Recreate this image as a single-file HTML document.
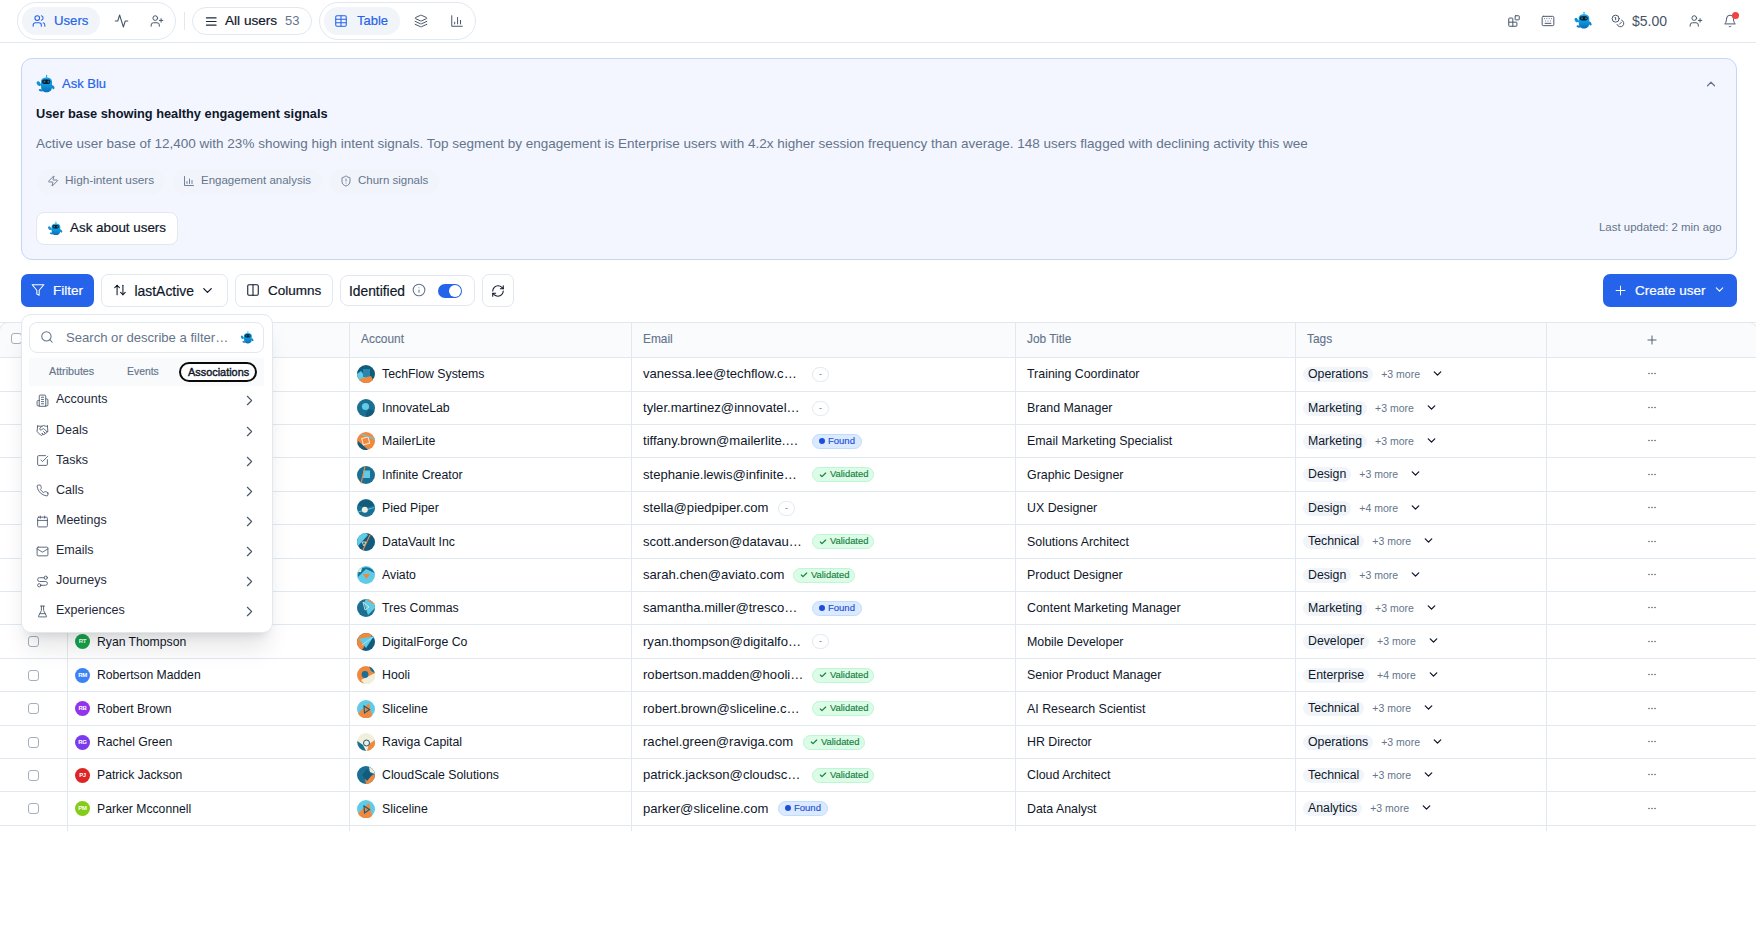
<!DOCTYPE html>
<html><head><meta charset="utf-8">
<style>
*{box-sizing:border-box;margin:0;padding:0}
html,body{width:1756px;height:945px;overflow:hidden;background:#fff}
body{font-family:"Liberation Sans",sans-serif;color:#0f172a;position:relative;font-size:13px}
.abs{position:absolute}
svg.i{fill:none;stroke:currentColor;stroke-width:2;stroke-linecap:round;stroke-linejoin:round;display:block}
.row{display:flex;align-items:center}
/* header */
#hdr{left:0;top:0;width:1756px;height:43px;border-bottom:1px solid #e2e8f0}
.pill{position:absolute;border:1px solid #e2e8f0;border-radius:20px;background:#fff}
.inpill{position:absolute;background:#f1f5f9;border-radius:14px}
.txt{position:absolute;white-space:nowrap}
.med{-webkit-text-stroke:0.2px currentColor}
.th{font-size:11.9px;color:#64748b;line-height:14px;-webkit-text-stroke:0.12px currentColor}
.td{color:#0f172a;line-height:16px}
.cb{width:11px;height:11px;border:1px solid #a3afc0;border-radius:3px;background:#fff}
.av{width:15px;height:15px;border-radius:50%;color:#fff;font-size:6px;font-weight:bold;text-align:center;line-height:15px;letter-spacing:-0.3px}
.bdash{width:17px;height:15px;border:1px solid #e2e8f0;border-radius:8px;font-size:9px;color:#64748b;text-align:center;line-height:12px}
.bfound{height:15px;border:1px solid #bfdbfe;background:#dbeafe;border-radius:8px;font-size:9.5px;color:#1d4ed8;line-height:12px;padding:0 6px 1px 6px;display:flex;align-items:center;gap:3px;white-space:nowrap;-webkit-text-stroke:0.15px currentColor}
.bfound .dot{width:6px;height:6px;border-radius:50%;background:#1d4ed8;display:inline-block}
.bvalid{height:15px;border:1px solid #bbf7d0;background:#dcfce7;border-radius:8px;font-size:9.4px;color:#15803d;line-height:12px;padding:0 5px 1px 6px;display:flex;align-items:center;gap:3px;white-space:nowrap;-webkit-text-stroke:0.15px currentColor}
.tagrow{display:flex;align-items:center;height:16px;white-space:nowrap}
.chip{background:#f1f5f9;border-radius:8px;height:15px;line-height:15px;padding:0 5px;font-size:12.3px;color:#0f172a}
.more{font-size:10.5px;color:#64748b;margin-left:8px;margin-right:12px;position:relative;top:-0.5px}
</style></head>
<body>
<svg width="0" height="0" style="position:absolute">
<defs>
<linearGradient id="rg" x1="0" y1="0" x2="0" y2="1"><stop offset="0" stop-color="#1aa6e6"/><stop offset="0.55" stop-color="#0d95da"/><stop offset="1" stop-color="#0a6cb6"/></linearGradient>
<g id="robo">
<rect x="12" y="2.8" width="1.1" height="3.6" rx="0.55" fill="#2aa9e6"/>
<ellipse cx="4.6" cy="11.6" rx="1.7" ry="2.5" transform="rotate(-35 4.6 11.6)" fill="#1590d6"/>
<path d="M5 12.5L8 14.5 8 11.5Z" fill="#1590d6"/>
<ellipse cx="18.9" cy="15.2" rx="1.3" ry="2.2" transform="rotate(-30 18.9 15.2)" fill="#1485cc"/>
<ellipse cx="6.8" cy="18.2" rx="2.1" ry="1.1" transform="rotate(15 6.8 18.2)" fill="#137fc6"/>
<path d="M7 9.6C7 6.9 9.6 5.6 12.5 5.6S18 6.9 18 9.6V15C18 18.5 15.5 20.3 12.5 20.3S7.1 18.5 7.1 15Z" fill="url(#rg)"/>
<rect x="8.1" y="7.5" width="8.3" height="4.4" rx="2.2" fill="#06182b"/>
<circle cx="10.5" cy="9.7" r="1.15" fill="#1a7594"/>
<circle cx="14.5" cy="9.7" r="1.15" fill="#1a7594"/>
</g>
</defs></svg>
<!-- HEADER -->
<div id="hdr" class="abs"></div>
<div class="pill" style="left:17px;top:2px;width:159px;height:38px"></div>
<div class="inpill" style="left:22px;top:7px;width:78px;height:28px"></div>
<svg class="i abs" style="left:32px;top:14px;color:#2563eb;stroke-width:1.8" width="14" height="14" viewBox="0 0 24 24"><path d="M16 21v-2a4 4 0 0 0-4-4H6a4 4 0 0 0-4 4v2"/><circle cx="9" cy="7" r="4"/><path d="M22 21v-2a4 4 0 0 0-3-3.87"/><path d="M16 3.13a4 4 0 0 1 0 7.75"/></svg>
<div class="txt med" style="left:54px;top:13px;font-size:13.2px;color:#2563eb">Users</div>
<svg class="i abs" style="left:113.5px;top:13px;color:#475569;stroke-width:1.7" width="15" height="16" viewBox="0 0 24 24" preserveAspectRatio="none"><path d="M22 12h-4l-3 9L9 3l-3 9H2"/></svg>
<svg class="i abs" style="left:150px;top:14px;color:#475569;stroke-width:1.7" width="14" height="14" viewBox="0 0 24 24"><path d="M16 21v-2a4 4 0 0 0-4-4H6a4 4 0 0 0-4 4v2"/><circle cx="9" cy="7" r="4"/><line x1="19" x2="19" y1="8" y2="14"/><line x1="22" x2="16" y1="11" y2="11"/></svg>
<div class="abs" style="left:184px;top:12px;width:1px;height:18px;background:#e2e8f0"></div>
<div class="pill" style="left:192px;top:7px;width:120px;height:28px;border-radius:14px"></div>
<svg class="i abs" style="left:204px;top:13.5px;color:#1e293b;stroke-width:1.8" width="14.5" height="15" viewBox="0 0 24 24"><line x1="4" x2="20" y1="12" y2="12"/><line x1="4" x2="20" y1="6" y2="6"/><line x1="4" x2="20" y1="18" y2="18"/></svg>
<div class="txt med" style="left:225px;top:13px;font-size:13.6px;color:#0f172a">All users</div>
<div class="txt" style="left:285px;top:13px;font-size:13px;color:#64748b">53</div>
<div class="pill" style="left:319px;top:2px;width:157px;height:38px"></div>
<div class="inpill" style="left:324px;top:7px;width:76px;height:28px"></div>
<svg class="i abs" style="left:334px;top:14px;color:#2563eb;stroke-width:1.8" width="14" height="14" viewBox="0 0 24 24"><path d="M12 3v18"/><rect width="18" height="18" x="3" y="3" rx="2"/><path d="M3 9h18"/><path d="M3 15h18"/></svg>
<div class="txt med" style="left:357px;top:13px;font-size:13px;color:#2563eb">Table</div>
<svg class="i abs" style="left:414px;top:14px;color:#475569;stroke-width:1.7" width="14" height="14" viewBox="0 0 24 24"><path d="m12.83 2.18a2 2 0 0 0-1.66 0L2.6 6.08a1 1 0 0 0 0 1.83l8.58 3.91a2 2 0 0 0 1.66 0l8.58-3.9a1 1 0 0 0 0-1.83Z"/><path d="m22 17.65-9.17 4.16a2 2 0 0 1-1.66 0L2 17.65"/><path d="m22 12.65-9.17 4.16a2 2 0 0 1-1.66 0L2 12.65"/></svg>
<svg class="i abs" style="left:450px;top:14px;color:#475569;stroke-width:1.7" width="14" height="14" viewBox="0 0 24 24"><path d="M3 3v18h18"/><path d="M18 17v-6"/><path d="M13 17V6"/><path d="M8 17v-3"/></svg>

<!--RIGHT-->
<svg class="i abs" style="left:1507px;top:14px;color:#475569;stroke-width:1.7" width="14" height="14" viewBox="0 0 24 24"><rect width="7" height="7" x="14" y="3" rx="1"/><path d="M10 21V8a1 1 0 0 0-1-1H4a1 1 0 0 0-1 1v12a1 1 0 0 0 1 1h12a1 1 0 0 0 1-1v-5a1 1 0 0 0-1-1H3"/></svg>
<svg class="i abs" style="left:1541px;top:14px;color:#475569;stroke-width:1.7" width="14" height="14" viewBox="0 0 24 24"><path d="M10 8h.01"/><path d="M12 12h.01"/><path d="M14 8h.01"/><path d="M16 12h.01"/><path d="M18 8h.01"/><path d="M6 8h.01"/><path d="M7 16h10"/><path d="M8 12h.01"/><rect width="20" height="16" x="2" y="4" rx="2"/></svg>
<svg class="abs robot" style="left:1572px;top:9px" width="23" height="23" viewBox="0 0 24 24"><use href="#robo"/></svg>
<svg class="i abs" style="left:1611px;top:14px;color:#475569;stroke-width:1.7" width="14" height="14" viewBox="0 0 24 24"><circle cx="8" cy="8" r="6"/><path d="M18.09 10.37A6 6 0 1 1 10.34 18"/><path d="M7 6h1v4"/><path d="m16.71 13.88.7.71-2.82 2.82"/></svg>
<div class="txt" style="left:1632px;top:13px;font-size:14px;color:#475569">$5.00</div>
<svg class="i abs" style="left:1689px;top:14px;color:#475569;stroke-width:1.7" width="14" height="14" viewBox="0 0 24 24"><path d="M16 21v-2a4 4 0 0 0-4-4H6a4 4 0 0 0-4 4v2"/><circle cx="9" cy="7" r="4"/><line x1="19" x2="19" y1="8" y2="14"/><line x1="22" x2="16" y1="11" y2="11"/></svg>
<svg class="i abs" style="left:1723px;top:14px;color:#475569;stroke-width:1.7" width="14" height="14" viewBox="0 0 24 24"><path d="M6 8a6 6 0 0 1 12 0c0 7 3 9 3 9H3s3-2 3-9"/><path d="M10.3 21a1.94 1.94 0 0 0 3.4 0"/></svg>
<div class="abs" style="left:1732px;top:12px;width:7px;height:7px;border-radius:50%;background:#ef4444"></div>

<!-- CARD -->
<div class="abs" style="left:21px;top:58px;width:1716px;height:202px;background:#f3f6fe;border:1px solid #c6d6f7;border-radius:11px"></div>
<svg class="abs" style="left:34px;top:72px" width="24" height="24" viewBox="0 0 24 24"><use href="#robo"/></svg>
<div class="txt med" style="left:62px;top:76px;font-size:13px;color:#2563eb">Ask Blu</div>
<svg class="i abs" style="left:1704px;top:77px;color:#64748b;stroke-width:2.1" width="14" height="14" viewBox="0 0 24 24"><path d="m18 15-6-6-6 6"/></svg>
<div class="txt" style="left:36px;top:106px;font-size:12.8px;font-weight:bold;color:#0f172a">User base showing healthy engagement signals</div>
<div class="txt" style="left:36px;top:136px;font-size:13.5px;color:#64748b">Active user base of 12,400 with 23% showing high intent signals. Top segment by engagement is Enterprise users with 4.2x higher session frequency than average. 148 users flagged with declining activity this wee</div>
<div class="abs" style="left:37px;top:169px;width:127px;height:25px;border-radius:13px;background:#f1f4fb"></div>
<div class="abs" style="left:173px;top:169px;width:149px;height:25px;border-radius:13px;background:#f1f4fb"></div>
<div class="abs" style="left:330px;top:169px;width:109px;height:25px;border-radius:13px;background:#f1f4fb"></div>
<svg class="i abs" style="left:47px;top:175px;color:#64748b;stroke-width:1.8" width="12" height="12" viewBox="0 0 24 24"><path d="M4 14a1 1 0 0 1-.78-1.63l9.9-10.2a.5.5 0 0 1 .86.46l-1.92 6.02A1 1 0 0 0 13 10h7a1 1 0 0 1 .78 1.630l-9.9 10.2a.5.5 0 0 1-.86-.46l1.92-6.02A1 1 0 0 0 11 14z"/></svg>
<div class="txt" style="left:65px;top:173px;font-size:11.8px;color:#64748b">High-intent users</div>
<svg class="i abs" style="left:183px;top:175px;color:#64748b;stroke-width:1.8" width="12" height="12" viewBox="0 0 24 24"><path d="M3 3v18h18"/><path d="M18 17v-6"/><path d="M13 17V8"/><path d="M8 17v-4"/></svg>
<div class="txt" style="left:201px;top:174px;font-size:11.5px;color:#64748b">Engagement analysis</div>
<svg class="i abs" style="left:340px;top:175px;color:#64748b;stroke-width:1.8" width="12" height="12" viewBox="0 0 24 24"><path d="M20 13c0 5-3.5 7.5-7.66 8.95a1 1 0 0 1-.67-.01C7.5 20.5 4 18 4 13V6a1 1 0 0 1 1-1c2 0 4.5-1.2 6.24-2.72a1.17 1.17 0 0 1 1.52 0C14.51 3.81 17 5 19 5a1 1 0 0 1 1 1z"/><path d="M12 8v4"/><path d="M12 16h.01"/></svg>
<div class="txt" style="left:358px;top:174px;font-size:11.5px;color:#64748b">Churn signals</div>
<div class="abs" style="left:36px;top:212px;width:142px;height:33px;border-radius:8px;background:#fff;border:1px solid #e2e8f0"></div>
<svg class="abs" style="left:46px;top:218.5px" width="19" height="19" viewBox="0 0 24 24"><use href="#robo"/></svg>
<div class="txt med" style="left:70px;top:220px;font-size:13.4px;color:#0f172a">Ask about users</div>
<div class="txt" style="left:1599px;top:221px;font-size:11.45px;color:#64748b">Last updated: 2 min ago</div>

<!-- TOOLBAR -->
<div class="abs" style="left:21px;top:274px;width:73px;height:33px;border-radius:7px;background:#2563eb"></div>
<svg class="i abs" style="left:31px;top:283px;color:#fff;stroke-width:1.8" width="14" height="14" viewBox="0 0 24 24"><polygon points="22 3 2 3 10 12.46 10 19 14 21 14 12.46 22 3"/></svg>
<div class="txt med" style="left:53px;top:283px;font-size:13.5px;color:#fff">Filter</div>
<div class="abs" style="left:101px;top:274px;width:127px;height:33px;border-radius:7px;background:#fff;border:1px solid #e2e8f0"></div>
<svg class="i abs" style="left:113px;top:283px;color:#0f172a;stroke-width:1.8" width="14" height="14" viewBox="0 0 24 24"><path d="m21 16-4 4-4-4"/><path d="M17 20V4"/><path d="m3 8 4-4 4 4"/><path d="M7 4v16"/></svg>
<div class="txt med" style="left:134.5px;top:283px;font-size:13.9px;color:#0f172a">lastActive</div>
<svg class="i abs" style="left:200px;top:283px;color:#0f172a;stroke-width:2" width="15" height="15" viewBox="0 0 24 24"><path d="m6 9 6 6 6-6"/></svg>
<div class="abs" style="left:235px;top:274px;width:98px;height:33px;border-radius:7px;background:#fff;border:1px solid #e2e8f0"></div>
<svg class="i abs" style="left:246px;top:283px;color:#0f172a;stroke-width:1.8" width="14" height="14" viewBox="0 0 24 24"><rect width="18" height="18" x="3" y="3" rx="2"/><path d="M12 3v18"/></svg>
<div class="txt med" style="left:268px;top:283px;font-size:13.5px;color:#0f172a">Columns</div>
<div class="abs" style="left:340px;top:275px;width:135px;height:31px;border-radius:8px;background:#fff;border:1px solid #e2e8f0"></div>
<div class="txt med" style="left:349px;top:284px;font-size:13.8px;color:#0f172a">Identified</div>
<svg class="i abs" style="left:412px;top:283px;color:#64748b;stroke-width:1.8" width="14" height="14" viewBox="0 0 24 24"><circle cx="12" cy="12" r="10"/><path d="M12 16v-4"/><path d="M12 8h.01"/></svg>
<div class="abs" style="left:438px;top:284px;width:24px;height:14px;border-radius:7px;background:#2563eb"></div>
<div class="abs" style="left:449px;top:285px;width:12px;height:12px;border-radius:50%;background:#fff"></div>
<div class="abs" style="left:482px;top:274px;width:32px;height:33px;border-radius:7px;background:#fff;border:1px solid #e2e8f0"></div>
<svg class="i abs" style="left:491px;top:284px;color:#0f172a;stroke-width:1.8" width="14" height="14" viewBox="0 0 24 24"><path d="M3 12a9 9 0 0 1 9-9 9.75 9.75 0 0 1 6.74 2.74L21 8"/><path d="M21 3v5h-5"/><path d="M21 12a9 9 0 0 1-9 9 9.75 9.75 0 0 1-6.74-2.74L3 16"/><path d="M8 16H3v5"/></svg>
<div class="abs" style="left:1603px;top:274px;width:134px;height:33px;border-radius:7px;background:#2563eb"></div>
<svg class="i abs" style="left:1612.5px;top:283px;color:#fff;stroke-width:1.6" width="15" height="15" viewBox="0 0 24 24"><path d="M5 12h14"/><path d="M12 5v14"/></svg>
<div class="txt med" style="left:1635px;top:283px;font-size:13.5px;color:#fff">Create user</div>
<svg class="i abs" style="left:1712.5px;top:283px;color:#fff;stroke-width:2" width="13" height="13" viewBox="0 0 24 24"><path d="m6 9 6 6 6-6"/></svg>

<!-- TABLE -->
<div class="abs" style="left:-1px;top:322px;width:1759px;height:36px;background:#f9fbfd;border:1px solid #e2e8f0;border-bottom:none;border-radius:9px 9px 0 0"></div>
<div class="abs" style="left:0;top:322px;width:1756px;height:1px;background:#e2e8f0"></div>
<div class="abs" style="left:11px;top:333px;width:11px;height:11px;border:1px solid #a3afc0;border-radius:3px;background:#fff"></div>
<div class="abs" style="left:67px;top:323px;width:1px;height:508px;background:#e2e8f0"></div>
<div class="abs" style="left:349px;top:323px;width:1px;height:508px;background:#e2e8f0"></div>
<div class="abs" style="left:631px;top:323px;width:1px;height:508px;background:#e2e8f0"></div>
<div class="abs" style="left:1015px;top:323px;width:1px;height:508px;background:#e2e8f0"></div>
<div class="abs" style="left:1295px;top:323px;width:1px;height:508px;background:#e2e8f0"></div>
<div class="abs" style="left:1546px;top:323px;width:1px;height:508px;background:#e2e8f0"></div>
<div class="abs" style="left:0;top:357px;width:1756px;height:1px;background:#e2e8f0"></div>
<div class="abs" style="left:0;top:391px;width:1756px;height:1px;background:#e2e8f0"></div>
<div class="abs" style="left:0;top:424px;width:1756px;height:1px;background:#e2e8f0"></div>
<div class="abs" style="left:0;top:457px;width:1756px;height:1px;background:#e2e8f0"></div>
<div class="abs" style="left:0;top:491px;width:1756px;height:1px;background:#e2e8f0"></div>
<div class="abs" style="left:0;top:524px;width:1756px;height:1px;background:#e2e8f0"></div>
<div class="abs" style="left:0;top:558px;width:1756px;height:1px;background:#e2e8f0"></div>
<div class="abs" style="left:0;top:591px;width:1756px;height:1px;background:#e2e8f0"></div>
<div class="abs" style="left:0;top:624px;width:1756px;height:1px;background:#e2e8f0"></div>
<div class="abs" style="left:0;top:658px;width:1756px;height:1px;background:#e2e8f0"></div>
<div class="abs" style="left:0;top:691px;width:1756px;height:1px;background:#e2e8f0"></div>
<div class="abs" style="left:0;top:725px;width:1756px;height:1px;background:#e2e8f0"></div>
<div class="abs" style="left:0;top:758px;width:1756px;height:1px;background:#e2e8f0"></div>
<div class="abs" style="left:0;top:791px;width:1756px;height:1px;background:#e2e8f0"></div>
<div class="abs" style="left:0;top:825px;width:1756px;height:1px;background:#e2e8f0"></div>
<div class="txt th" style="left:98px;top:332px">Name</div>
<div class="txt th" style="left:361px;top:332px">Account</div>
<div class="txt th" style="left:643px;top:332px">Email</div>
<div class="txt th" style="left:1027px;top:332px">Job Title</div>
<div class="txt th" style="left:1307px;top:332px">Tags</div>
<svg class="i abs" style="left:1645px;top:333px;color:#475569;stroke-width:1.6" width="14" height="14" viewBox="0 0 24 24"><path d="M5 12h14"/><path d="M12 5v14"/></svg>
<div class="abs cb" style="left:28px;top:368.5px"></div>
<svg class="abs" style="left:357px;top:365.0px" width="18" height="18" viewBox="0 0 18 18"><circle cx="9" cy="9" r="9" fill="#135b7c"/><path d="M0 9A9 9 0 0 0 4 16.5L9 13 4 6Z" fill="#5fcbe6"/><rect x="6" y="4" width="7" height="8" fill="#2a86ad"/><path d="M2 14.5A9 9 0 0 0 16 15L14 11 6 13Z" fill="#f0883e"/></svg>
<div class="txt td" style="left:382px;top:366.0px;font-size:12.3px">TechFlow Systems</div>
<div class="txt td" style="left:643px;top:366.0px;font-size:13.1px">vanessa.lee@techflow.c…</div>
<div class="abs bdash" style="left:812px;top:366.5px">-</div>
<div class="txt td" style="left:1027px;top:366.0px;font-size:12.4px">Training Coordinator</div>
<div class="abs tagrow" style="left:1303px;top:366.0px"><span class="chip">Operations</span><span class="more">+3 more</span><svg class="i" style="color:#0f172a;stroke-width:2.4;position:relative;top:-1px;left:-1px" width="13" height="13" viewBox="0 0 24 24"><path d="m6 9 6 6 6-6"/></svg></div>
<svg class="abs" style="left:1646px;top:368.0px" width="12" height="12" viewBox="0 0 24 24"><circle cx="6" cy="11" r="1.4" fill="#334155"/><circle cx="12" cy="11" r="1.4" fill="#334155"/><circle cx="18" cy="11" r="1.4" fill="#334155"/></svg>
<div class="abs cb" style="left:28px;top:402.5px"></div>
<svg class="abs" style="left:357px;top:399.0px" width="18" height="18" viewBox="0 0 18 18"><circle cx="9" cy="9" r="9" fill="#1a6f93"/><circle cx="8.5" cy="7.5" r="3.6" fill="#5fcbe6"/><path d="M9 18A9 9 0 0 0 17.5 12L12 10 9 14Z" fill="#135b7c"/></svg>
<div class="txt td" style="left:382px;top:400.0px;font-size:12.3px">InnovateLab</div>
<div class="txt td" style="left:643px;top:400.0px;font-size:13.1px">tyler.martinez@innovatel…</div>
<div class="abs bdash" style="left:812px;top:400.5px">-</div>
<div class="txt td" style="left:1027px;top:400.0px;font-size:12.4px">Brand Manager</div>
<div class="abs tagrow" style="left:1303px;top:400.0px"><span class="chip">Marketing</span><span class="more">+3 more</span><svg class="i" style="color:#0f172a;stroke-width:2.4;position:relative;top:-1px;left:-1px" width="13" height="13" viewBox="0 0 24 24"><path d="m6 9 6 6 6-6"/></svg></div>
<svg class="abs" style="left:1646px;top:402.0px" width="12" height="12" viewBox="0 0 24 24"><circle cx="6" cy="11" r="1.4" fill="#334155"/><circle cx="12" cy="11" r="1.4" fill="#334155"/><circle cx="18" cy="11" r="1.4" fill="#334155"/></svg>
<div class="abs cb" style="left:28px;top:435.5px"></div>
<svg class="abs" style="left:357px;top:432.0px" width="18" height="18" viewBox="0 0 18 18"><circle cx="9" cy="9" r="9" fill="#f0883e"/><path d="M0.5 12A9 9 0 0 0 11 17.8L1 9Z" fill="#135b7c"/><rect x="5.5" y="5.5" width="6.5" height="6.5" transform="rotate(-15 9 9)" fill="none" stroke="#f1eedc" stroke-width="1"/><path d="M4 2L18 7" stroke="#5fcbe6" stroke-width="1.2"/></svg>
<div class="txt td" style="left:382px;top:433.0px;font-size:12.3px">MailerLite</div>
<div class="txt td" style="left:643px;top:433.0px;font-size:13.1px">tiffany.brown@mailerlite.…</div>
<div class="abs bfound" style="left:812px;top:433.5px"><span class="dot"></span>Found</div>
<div class="txt td" style="left:1027px;top:433.0px;font-size:12.4px">Email Marketing Specialist</div>
<div class="abs tagrow" style="left:1303px;top:433.0px"><span class="chip">Marketing</span><span class="more">+3 more</span><svg class="i" style="color:#0f172a;stroke-width:2.4;position:relative;top:-1px;left:-1px" width="13" height="13" viewBox="0 0 24 24"><path d="m6 9 6 6 6-6"/></svg></div>
<svg class="abs" style="left:1646px;top:435.0px" width="12" height="12" viewBox="0 0 24 24"><circle cx="6" cy="11" r="1.4" fill="#334155"/><circle cx="12" cy="11" r="1.4" fill="#334155"/><circle cx="18" cy="11" r="1.4" fill="#334155"/></svg>
<div class="abs cb" style="left:28px;top:469.0px"></div>
<svg class="abs" style="left:357px;top:465.5px" width="18" height="18" viewBox="0 0 18 18"><circle cx="9" cy="9" r="9" fill="#1a6f93"/><rect x="6" y="4.5" width="7" height="7.5" fill="#5fcbe6"/><path d="M8 0.5L4 17.5" stroke="#f0883e" stroke-width="1.1"/></svg>
<div class="txt td" style="left:382px;top:466.5px;font-size:12.3px">Infinite Creator</div>
<div class="txt td" style="left:643px;top:466.5px;font-size:13.1px">stephanie.lewis@infinite…</div>
<div class="abs bvalid" style="left:812px;top:467.0px"><svg class="i" style="color:#15803d;stroke-width:3.5;margin-top:1px" width="8" height="8" viewBox="0 0 24 24"><path d="M20 6 9 17l-5-5"/></svg>Validated</div>
<div class="txt td" style="left:1027px;top:466.5px;font-size:12.4px">Graphic Designer</div>
<div class="abs tagrow" style="left:1303px;top:466.5px"><span class="chip">Design</span><span class="more">+3 more</span><svg class="i" style="color:#0f172a;stroke-width:2.4;position:relative;top:-1px;left:-1px" width="13" height="13" viewBox="0 0 24 24"><path d="m6 9 6 6 6-6"/></svg></div>
<svg class="abs" style="left:1646px;top:468.5px" width="12" height="12" viewBox="0 0 24 24"><circle cx="6" cy="11" r="1.4" fill="#334155"/><circle cx="12" cy="11" r="1.4" fill="#334155"/><circle cx="18" cy="11" r="1.4" fill="#334155"/></svg>
<div class="abs cb" style="left:28px;top:502.5px"></div>
<svg class="abs" style="left:357px;top:499.0px" width="18" height="18" viewBox="0 0 18 18"><circle cx="9" cy="9" r="9" fill="#1a6f93"/><path d="M1 6A9 9 0 0 1 17 6L9 9Z" fill="#135b7c"/><path d="M0.8 13L17.5 8.5" stroke="#5fcbe6" stroke-width="0.9"/><circle cx="7.8" cy="10.8" r="3" fill="#f1eedc"/></svg>
<div class="txt td" style="left:382px;top:500.0px;font-size:12.3px">Pied Piper</div>
<div class="txt td" style="left:643px;top:500.0px;font-size:13.1px">stella@piedpiper.com</div>
<div class="abs bdash" style="left:778px;top:500.5px">-</div>
<div class="txt td" style="left:1027px;top:500.0px;font-size:12.4px">UX Designer</div>
<div class="abs tagrow" style="left:1303px;top:500.0px"><span class="chip">Design</span><span class="more">+4 more</span><svg class="i" style="color:#0f172a;stroke-width:2.4;position:relative;top:-1px;left:-1px" width="13" height="13" viewBox="0 0 24 24"><path d="m6 9 6 6 6-6"/></svg></div>
<svg class="abs" style="left:1646px;top:502.0px" width="12" height="12" viewBox="0 0 24 24"><circle cx="6" cy="11" r="1.4" fill="#334155"/><circle cx="12" cy="11" r="1.4" fill="#334155"/><circle cx="18" cy="11" r="1.4" fill="#334155"/></svg>
<div class="abs cb" style="left:28px;top:536.0px"></div>
<svg class="abs" style="left:357px;top:532.5px" width="18" height="18" viewBox="0 0 18 18"><circle cx="9" cy="9" r="9" fill="#135b7c"/><path d="M9 0A9 9 0 0 0 1 13L11 2Z" fill="#5fcbe6"/><path d="M13 2L6 17" stroke="#f0883e" stroke-width="1.1"/><path d="M5 9L9 9 7 13Z" fill="none" stroke="#f1eedc" stroke-width="0.8"/></svg>
<div class="txt td" style="left:382px;top:533.5px;font-size:12.3px">DataVault Inc</div>
<div class="txt td" style="left:643px;top:533.5px;font-size:13.1px">scott.anderson@datavau…</div>
<div class="abs bvalid" style="left:812px;top:534.0px"><svg class="i" style="color:#15803d;stroke-width:3.5;margin-top:1px" width="8" height="8" viewBox="0 0 24 24"><path d="M20 6 9 17l-5-5"/></svg>Validated</div>
<div class="txt td" style="left:1027px;top:533.5px;font-size:12.4px">Solutions Architect</div>
<div class="abs tagrow" style="left:1303px;top:533.5px"><span class="chip">Technical</span><span class="more">+3 more</span><svg class="i" style="color:#0f172a;stroke-width:2.4;position:relative;top:-1px;left:-1px" width="13" height="13" viewBox="0 0 24 24"><path d="m6 9 6 6 6-6"/></svg></div>
<svg class="abs" style="left:1646px;top:535.5px" width="12" height="12" viewBox="0 0 24 24"><circle cx="6" cy="11" r="1.4" fill="#334155"/><circle cx="12" cy="11" r="1.4" fill="#334155"/><circle cx="18" cy="11" r="1.4" fill="#334155"/></svg>
<div class="abs cb" style="left:28px;top:569.5px"></div>
<svg class="abs" style="left:357px;top:566.0px" width="18" height="18" viewBox="0 0 18 18"><circle cx="9" cy="9" r="9" fill="#5fcbe6"/><path d="M4 3A9 9 0 0 1 17.5 7L9 3 1 11A9 9 0 0 1 4 3Z" fill="#1a6f93"/><path d="M1 6A9 9 0 0 1 5 1.5L4 6Z" fill="#f1eedc"/><path d="M6 8L13 8 9.5 13Z" fill="#f0883e"/></svg>
<div class="txt td" style="left:382px;top:567.0px;font-size:12.3px">Aviato</div>
<div class="txt td" style="left:643px;top:567.0px;font-size:13.1px">sarah.chen@aviato.com</div>
<div class="abs bvalid" style="left:793px;top:567.5px"><svg class="i" style="color:#15803d;stroke-width:3.5;margin-top:1px" width="8" height="8" viewBox="0 0 24 24"><path d="M20 6 9 17l-5-5"/></svg>Validated</div>
<div class="txt td" style="left:1027px;top:567.0px;font-size:12.4px">Product Designer</div>
<div class="abs tagrow" style="left:1303px;top:567.0px"><span class="chip">Design</span><span class="more">+3 more</span><svg class="i" style="color:#0f172a;stroke-width:2.4;position:relative;top:-1px;left:-1px" width="13" height="13" viewBox="0 0 24 24"><path d="m6 9 6 6 6-6"/></svg></div>
<svg class="abs" style="left:1646px;top:569.0px" width="12" height="12" viewBox="0 0 24 24"><circle cx="6" cy="11" r="1.4" fill="#334155"/><circle cx="12" cy="11" r="1.4" fill="#334155"/><circle cx="18" cy="11" r="1.4" fill="#334155"/></svg>
<div class="abs cb" style="left:28px;top:602.5px"></div>
<svg class="abs" style="left:357px;top:599.0px" width="18" height="18" viewBox="0 0 18 18"><circle cx="9" cy="9" r="9" fill="#1a6f93"/><path d="M9 0A9 9 0 0 1 18 9L11 16 7 4Z" fill="#5fcbe6"/><path d="M10 0.5L17.5 5" stroke="#f0883e" stroke-width="1.2"/><path d="M6 3L8 11 12 8Z" fill="none" stroke="#f1eedc" stroke-width="0.8"/></svg>
<div class="txt td" style="left:382px;top:600.0px;font-size:12.3px">Tres Commas</div>
<div class="txt td" style="left:643px;top:600.0px;font-size:13.1px">samantha.miller@tresco…</div>
<div class="abs bfound" style="left:812px;top:600.5px"><span class="dot"></span>Found</div>
<div class="txt td" style="left:1027px;top:600.0px;font-size:12.4px">Content Marketing Manager</div>
<div class="abs tagrow" style="left:1303px;top:600.0px"><span class="chip">Marketing</span><span class="more">+3 more</span><svg class="i" style="color:#0f172a;stroke-width:2.4;position:relative;top:-1px;left:-1px" width="13" height="13" viewBox="0 0 24 24"><path d="m6 9 6 6 6-6"/></svg></div>
<svg class="abs" style="left:1646px;top:602.0px" width="12" height="12" viewBox="0 0 24 24"><circle cx="6" cy="11" r="1.4" fill="#334155"/><circle cx="12" cy="11" r="1.4" fill="#334155"/><circle cx="18" cy="11" r="1.4" fill="#334155"/></svg>
<div class="abs cb" style="left:28px;top:636.0px"></div>
<div class="abs av" style="left:75px;top:634.0px;background:#16a34a">RT</div>
<div class="txt td" style="left:97px;top:633.5px;font-size:12.2px">Ryan Thompson</div>
<svg class="abs" style="left:357px;top:632.5px" width="18" height="18" viewBox="0 0 18 18"><circle cx="9" cy="9" r="9" fill="#135b7c"/><path d="M9 0A9 9 0 0 0 0 9 9 9 0 0 0 5 17L10 9 15 2A9 9 0 0 0 9 0Z" fill="#f0883e"/><path d="M2 6L17 3 9 15Z" fill="#5fcbe6"/><path d="M5 12L16 4" stroke="#f1eedc" stroke-width="0.6"/></svg>
<div class="txt td" style="left:382px;top:633.5px;font-size:12.3px">DigitalForge Co</div>
<div class="txt td" style="left:643px;top:633.5px;font-size:13.1px">ryan.thompson@digitalfo…</div>
<div class="abs bdash" style="left:812px;top:634.0px">-</div>
<div class="txt td" style="left:1027px;top:633.5px;font-size:12.4px">Mobile Developer</div>
<div class="abs tagrow" style="left:1303px;top:633.5px"><span class="chip">Developer</span><span class="more">+3 more</span><svg class="i" style="color:#0f172a;stroke-width:2.4;position:relative;top:-1px;left:-1px" width="13" height="13" viewBox="0 0 24 24"><path d="m6 9 6 6 6-6"/></svg></div>
<svg class="abs" style="left:1646px;top:635.5px" width="12" height="12" viewBox="0 0 24 24"><circle cx="6" cy="11" r="1.4" fill="#334155"/><circle cx="12" cy="11" r="1.4" fill="#334155"/><circle cx="18" cy="11" r="1.4" fill="#334155"/></svg>
<div class="abs cb" style="left:28px;top:669.5px"></div>
<div class="abs av" style="left:75px;top:667.5px;background:#3b82f6">RM</div>
<div class="txt td" style="left:97px;top:667.0px;font-size:12.2px">Robertson Madden</div>
<svg class="abs" style="left:357px;top:666.0px" width="18" height="18" viewBox="0 0 18 18"><circle cx="9" cy="9" r="9" fill="#f0883e"/><path d="M18 7A9 9 0 0 1 7 17.8L4 14Z" fill="#f1eedc"/><path d="M12 0.5A9 9 0 0 1 17.8 7L14 5Z" fill="#1a6f93"/><circle cx="8" cy="8.5" r="3.4" fill="#1a6f93"/></svg>
<div class="txt td" style="left:382px;top:667.0px;font-size:12.3px">Hooli</div>
<div class="txt td" style="left:643px;top:667.0px;font-size:13.1px">robertson.madden@hooli…</div>
<div class="abs bvalid" style="left:812px;top:667.5px"><svg class="i" style="color:#15803d;stroke-width:3.5;margin-top:1px" width="8" height="8" viewBox="0 0 24 24"><path d="M20 6 9 17l-5-5"/></svg>Validated</div>
<div class="txt td" style="left:1027px;top:667.0px;font-size:12.4px">Senior Product Manager</div>
<div class="abs tagrow" style="left:1303px;top:667.0px"><span class="chip">Enterprise</span><span class="more">+4 more</span><svg class="i" style="color:#0f172a;stroke-width:2.4;position:relative;top:-1px;left:-1px" width="13" height="13" viewBox="0 0 24 24"><path d="m6 9 6 6 6-6"/></svg></div>
<svg class="abs" style="left:1646px;top:669.0px" width="12" height="12" viewBox="0 0 24 24"><circle cx="6" cy="11" r="1.4" fill="#334155"/><circle cx="12" cy="11" r="1.4" fill="#334155"/><circle cx="18" cy="11" r="1.4" fill="#334155"/></svg>
<div class="abs cb" style="left:28px;top:703.0px"></div>
<div class="abs av" style="left:75px;top:701.0px;background:#9333ea">RB</div>
<div class="txt td" style="left:97px;top:700.5px;font-size:12.2px">Robert Brown</div>
<svg class="abs" style="left:357px;top:699.5px" width="18" height="18" viewBox="0 0 18 18"><circle cx="9" cy="9" r="9" fill="#5fcbe6"/><path d="M1 13.5A9 9 0 0 0 15 16L12 3Z" fill="#f0883e"/><path d="M7 6L12.5 9.5 7.5 13Z" fill="none" stroke="#135b7c" stroke-width="1.1"/></svg>
<div class="txt td" style="left:382px;top:700.5px;font-size:12.3px">Sliceline</div>
<div class="txt td" style="left:643px;top:700.5px;font-size:13.1px">robert.brown@sliceline.c…</div>
<div class="abs bvalid" style="left:812px;top:701.0px"><svg class="i" style="color:#15803d;stroke-width:3.5;margin-top:1px" width="8" height="8" viewBox="0 0 24 24"><path d="M20 6 9 17l-5-5"/></svg>Validated</div>
<div class="txt td" style="left:1027px;top:700.5px;font-size:12.4px">AI Research Scientist</div>
<div class="abs tagrow" style="left:1303px;top:700.5px"><span class="chip">Technical</span><span class="more">+3 more</span><svg class="i" style="color:#0f172a;stroke-width:2.4;position:relative;top:-1px;left:-1px" width="13" height="13" viewBox="0 0 24 24"><path d="m6 9 6 6 6-6"/></svg></div>
<svg class="abs" style="left:1646px;top:702.5px" width="12" height="12" viewBox="0 0 24 24"><circle cx="6" cy="11" r="1.4" fill="#334155"/><circle cx="12" cy="11" r="1.4" fill="#334155"/><circle cx="18" cy="11" r="1.4" fill="#334155"/></svg>
<div class="abs cb" style="left:28px;top:736.5px"></div>
<div class="abs av" style="left:75px;top:734.5px;background:#7c3aed">RG</div>
<div class="txt td" style="left:97px;top:734.0px;font-size:12.2px">Rachel Green</div>
<svg class="abs" style="left:357px;top:733.0px" width="18" height="18" viewBox="0 0 18 18"><circle cx="9" cy="9" r="9" fill="#f1eedc"/><path d="M0.3 8A9 9 0 0 0 9 18L6 12Z" fill="#1a6f93"/><path d="M18 7A9 9 0 0 1 10 17.9L12 11Z" fill="#f0883e"/><circle cx="9.5" cy="10" r="3" fill="#f1eedc" stroke="#135b7c" stroke-width="1"/></svg>
<div class="txt td" style="left:382px;top:734.0px;font-size:12.3px">Raviga Capital</div>
<div class="txt td" style="left:643px;top:734.0px;font-size:13.1px">rachel.green@raviga.com</div>
<div class="abs bvalid" style="left:803px;top:734.5px"><svg class="i" style="color:#15803d;stroke-width:3.5;margin-top:1px" width="8" height="8" viewBox="0 0 24 24"><path d="M20 6 9 17l-5-5"/></svg>Validated</div>
<div class="txt td" style="left:1027px;top:734.0px;font-size:12.4px">HR Director</div>
<div class="abs tagrow" style="left:1303px;top:734.0px"><span class="chip">Operations</span><span class="more">+3 more</span><svg class="i" style="color:#0f172a;stroke-width:2.4;position:relative;top:-1px;left:-1px" width="13" height="13" viewBox="0 0 24 24"><path d="m6 9 6 6 6-6"/></svg></div>
<svg class="abs" style="left:1646px;top:736.0px" width="12" height="12" viewBox="0 0 24 24"><circle cx="6" cy="11" r="1.4" fill="#334155"/><circle cx="12" cy="11" r="1.4" fill="#334155"/><circle cx="18" cy="11" r="1.4" fill="#334155"/></svg>
<div class="abs cb" style="left:28px;top:769.5px"></div>
<div class="abs av" style="left:75px;top:767.5px;background:#dc2626">PJ</div>
<div class="txt td" style="left:97px;top:767.0px;font-size:12.2px">Patrick Jackson</div>
<svg class="abs" style="left:357px;top:766.0px" width="18" height="18" viewBox="0 0 18 18"><circle cx="9" cy="9" r="9" fill="#1a6f93"/><path d="M17.8 8A9 9 0 0 1 9 18L8 13Z" fill="#f0883e"/><path d="M12 1A9 9 0 0 1 17.8 8L13 6Z" fill="#f1eedc"/><path d="M10 3L15 9 10 15 5 9Z" fill="#135b7c"/></svg>
<div class="txt td" style="left:382px;top:767.0px;font-size:12.3px">CloudScale Solutions</div>
<div class="txt td" style="left:643px;top:767.0px;font-size:13.1px">patrick.jackson@cloudsc…</div>
<div class="abs bvalid" style="left:812px;top:767.5px"><svg class="i" style="color:#15803d;stroke-width:3.5;margin-top:1px" width="8" height="8" viewBox="0 0 24 24"><path d="M20 6 9 17l-5-5"/></svg>Validated</div>
<div class="txt td" style="left:1027px;top:767.0px;font-size:12.4px">Cloud Architect</div>
<div class="abs tagrow" style="left:1303px;top:767.0px"><span class="chip">Technical</span><span class="more">+3 more</span><svg class="i" style="color:#0f172a;stroke-width:2.4;position:relative;top:-1px;left:-1px" width="13" height="13" viewBox="0 0 24 24"><path d="m6 9 6 6 6-6"/></svg></div>
<svg class="abs" style="left:1646px;top:769.0px" width="12" height="12" viewBox="0 0 24 24"><circle cx="6" cy="11" r="1.4" fill="#334155"/><circle cx="12" cy="11" r="1.4" fill="#334155"/><circle cx="18" cy="11" r="1.4" fill="#334155"/></svg>
<div class="abs cb" style="left:28px;top:803.0px"></div>
<div class="abs av" style="left:75px;top:801.0px;background:#84cc16">PM</div>
<div class="txt td" style="left:97px;top:800.5px;font-size:12.2px">Parker Mcconnell</div>
<svg class="abs" style="left:357px;top:799.5px" width="18" height="18" viewBox="0 0 18 18"><circle cx="9" cy="9" r="9" fill="#5fcbe6"/><path d="M1 13.5A9 9 0 0 0 15 16L12 3Z" fill="#f0883e"/><path d="M7 6L12.5 9.5 7.5 13Z" fill="none" stroke="#135b7c" stroke-width="1.1"/></svg>
<div class="txt td" style="left:382px;top:800.5px;font-size:12.3px">Sliceline</div>
<div class="txt td" style="left:643px;top:800.5px;font-size:13.1px">parker@sliceline.com</div>
<div class="abs bfound" style="left:778px;top:801.0px"><span class="dot"></span>Found</div>
<div class="txt td" style="left:1027px;top:800.5px;font-size:12.4px">Data Analyst</div>
<div class="abs tagrow" style="left:1303px;top:800.5px"><span class="chip">Analytics</span><span class="more">+3 more</span><svg class="i" style="color:#0f172a;stroke-width:2.4;position:relative;top:-1px;left:-1px" width="13" height="13" viewBox="0 0 24 24"><path d="m6 9 6 6 6-6"/></svg></div>
<svg class="abs" style="left:1646px;top:802.5px" width="12" height="12" viewBox="0 0 24 24"><circle cx="6" cy="11" r="1.4" fill="#334155"/><circle cx="12" cy="11" r="1.4" fill="#334155"/><circle cx="18" cy="11" r="1.4" fill="#334155"/></svg>
<!-- POPOVER -->
<div class="abs" style="left:21px;top:314px;width:252px;height:319px;background:#fff;border:1px solid #e2e8f0;border-radius:10px;box-shadow:0 20px 25px -5px rgba(0,0,0,0.1),0 8px 10px -6px rgba(0,0,0,0.1)"></div>
<div class="abs" style="left:29px;top:322px;width:235px;height:31px;background:#fff;border:1px solid #e2e8f0;border-radius:8px"></div>
<svg class="i abs" style="left:40px;top:330px;color:#64748b;stroke-width:1.8" width="14" height="14" viewBox="0 0 24 24"><circle cx="11" cy="11" r="8"/><path d="m21 21-4.3-4.3"/></svg>
<div class="txt" style="left:66px;top:330px;font-size:13.1px;color:#64748b;line-height:16px">Search or describe a filter…</div>
<svg class="abs" style="left:239px;top:329px" width="17" height="17" viewBox="0 0 24 24"><use href="#robo"/></svg>
<div class="abs" style="left:29px;top:358px;width:235px;height:28px;background:#f8fafc"></div>
<div class="txt" style="left:49px;top:365px;font-size:10.7px;color:#64748b;line-height:13px;-webkit-text-stroke:0.15px currentColor">Attributes</div>
<div class="txt" style="left:127px;top:365px;font-size:10.4px;color:#64748b;line-height:13px;-webkit-text-stroke:0.15px currentColor">Events</div>
<div class="abs" style="left:179px;top:362px;width:78px;height:20px;border:2px solid #0a0a0a;border-radius:10px;background:#fff"></div>
<div class="txt" style="left:188px;top:366px;font-size:10.9px;color:#0f172a;line-height:13px;-webkit-text-stroke:0.4px currentColor">Associations</div>
<svg class="i abs" style="left:35.5px;top:393.9px;color:#475569;stroke-width:1.6" width="13" height="13" viewBox="0 0 24 24"><path d="M6 22V4a2 2 0 0 1 2-2h8a2 2 0 0 1 2 2v18Z"/><path d="M6 12H4a2 2 0 0 0-2 2v6a2 2 0 0 0 2 2h2"/><path d="M18 9h2a2 2 0 0 1 2 2v9a2 2 0 0 1-2 2h-2"/><path d="M10 6h4"/><path d="M10 10h4"/><path d="M10 14h4"/><path d="M10 18h4"/></svg>
<div class="txt" style="left:56px;top:391.4px;font-size:12.5px;color:#1e293b;line-height:16px">Accounts</div>
<svg class="i abs" style="left:241px;top:392.4px;color:#475569;stroke-width:1.5" width="17" height="17" viewBox="0 0 24 24"><path d="m9 18 6-6-6-6"/></svg>
<svg class="i abs" style="left:35.5px;top:424.04999999999995px;color:#475569;stroke-width:1.6" width="13" height="13" viewBox="0 0 24 24"><path d="m11 17 2 2a1 1 0 1 0 3-3"/><path d="m14 14 2.5 2.5a1 1 0 1 0 3-3l-3.88-3.88a3 3 0 0 0-4.24 0l-.88.88a1 1 0 1 1-3-3l2.81-2.81a5.79 5.79 0 0 1 7.06-.87l.47.28a2 2 0 0 0 1.42.25L21 4"/><path d="m21 3 1 11h-2"/><path d="M3 3 2 14l6.5 6.5a1 1 0 1 0 3-3"/><path d="M3 4h8"/></svg>
<div class="txt" style="left:56px;top:421.54999999999995px;font-size:12.5px;color:#1e293b;line-height:16px">Deals</div>
<svg class="i abs" style="left:241px;top:422.54999999999995px;color:#475569;stroke-width:1.5" width="17" height="17" viewBox="0 0 24 24"><path d="m9 18 6-6-6-6"/></svg>
<svg class="i abs" style="left:35.5px;top:454.2px;color:#475569;stroke-width:1.6" width="13" height="13" viewBox="0 0 24 24"><path d="M21 10.5V19a2 2 0 0 1-2 2H5a2 2 0 0 1-2-2V5a2 2 0 0 1 2-2h12.5"/><path d="m9 11 3 3L22 4"/></svg>
<div class="txt" style="left:56px;top:451.7px;font-size:12.5px;color:#1e293b;line-height:16px">Tasks</div>
<svg class="i abs" style="left:241px;top:452.7px;color:#475569;stroke-width:1.5" width="17" height="17" viewBox="0 0 24 24"><path d="m9 18 6-6-6-6"/></svg>
<svg class="i abs" style="left:35.5px;top:484.34999999999997px;color:#475569;stroke-width:1.6" width="13" height="13" viewBox="0 0 24 24"><path d="M22 16.920v3a2 2 0 0 1-2.18 2 19.79 19.79 0 0 1-8.63-3.07 19.5 19.5 0 0 1-6-6 19.79 19.79 0 0 1-3.07-8.67A2 2 0 0 1 4.11 2h3a2 2 0 0 1 2 1.72 12.84 12.84 0 0 0 .7 2.81 2 2 0 0 1-.45 2.11L8.09 9.91a16 16 0 0 0 6 6l1.27-1.27a2 2 0 0 1 2.11-.45 12.84 12.84 0 0 0 2.81.7A2 2 0 0 1 22 16.92z"/></svg>
<div class="txt" style="left:56px;top:481.84999999999997px;font-size:12.5px;color:#1e293b;line-height:16px">Calls</div>
<svg class="i abs" style="left:241px;top:482.84999999999997px;color:#475569;stroke-width:1.5" width="17" height="17" viewBox="0 0 24 24"><path d="m9 18 6-6-6-6"/></svg>
<svg class="i abs" style="left:35.5px;top:514.5px;color:#475569;stroke-width:1.6" width="13" height="13" viewBox="0 0 24 24"><path d="M8 2v4"/><path d="M16 2v4"/><rect width="18" height="18" x="3" y="4" rx="2"/><path d="M3 10h18"/></svg>
<div class="txt" style="left:56px;top:512.0px;font-size:12.5px;color:#1e293b;line-height:16px">Meetings</div>
<svg class="i abs" style="left:241px;top:513.0px;color:#475569;stroke-width:1.5" width="17" height="17" viewBox="0 0 24 24"><path d="m9 18 6-6-6-6"/></svg>
<svg class="i abs" style="left:35.5px;top:544.65px;color:#475569;stroke-width:1.6" width="13" height="13" viewBox="0 0 24 24"><rect width="20" height="16" x="2" y="4" rx="2"/><path d="m22 7-8.970 5.7a1.94 1.94 0 0 1-2.06 0L2 7"/></svg>
<div class="txt" style="left:56px;top:542.15px;font-size:12.5px;color:#1e293b;line-height:16px">Emails</div>
<svg class="i abs" style="left:241px;top:543.15px;color:#475569;stroke-width:1.5" width="17" height="17" viewBox="0 0 24 24"><path d="m9 18 6-6-6-6"/></svg>
<svg class="i abs" style="left:35.5px;top:574.8px;color:#475569;stroke-width:1.6" width="13" height="13" viewBox="0 0 24 24"><circle cx="6" cy="19" r="3"/><path d="M9 19h8.5a3.5 3.5 0 0 0 0-7h-11a3.5 3.5 0 0 1 0-7H15"/><circle cx="18" cy="5" r="3"/></svg>
<div class="txt" style="left:56px;top:572.3px;font-size:12.5px;color:#1e293b;line-height:16px">Journeys</div>
<svg class="i abs" style="left:241px;top:573.3px;color:#475569;stroke-width:1.5" width="17" height="17" viewBox="0 0 24 24"><path d="m9 18 6-6-6-6"/></svg>
<svg class="i abs" style="left:35.5px;top:604.9499999999999px;color:#475569;stroke-width:1.6" width="13" height="13" viewBox="0 0 24 24"><path d="M10 2v7.527a2 2 0 0 1-.211.896L4.72 20.55a1 1 0 0 0 .9 1.45h12.76a1 1 0 0 0 .9-1.45l-5.069-10.127A2 2 0 0 1 14 9.527V2"/><path d="M8.5 2h7"/><path d="M7 16h10"/></svg>
<div class="txt" style="left:56px;top:602.4499999999999px;font-size:12.5px;color:#1e293b;line-height:16px">Experiences</div>
<svg class="i abs" style="left:241px;top:603.4499999999999px;color:#475569;stroke-width:1.5" width="17" height="17" viewBox="0 0 24 24"><path d="m9 18 6-6-6-6"/></svg>
</body></html>
